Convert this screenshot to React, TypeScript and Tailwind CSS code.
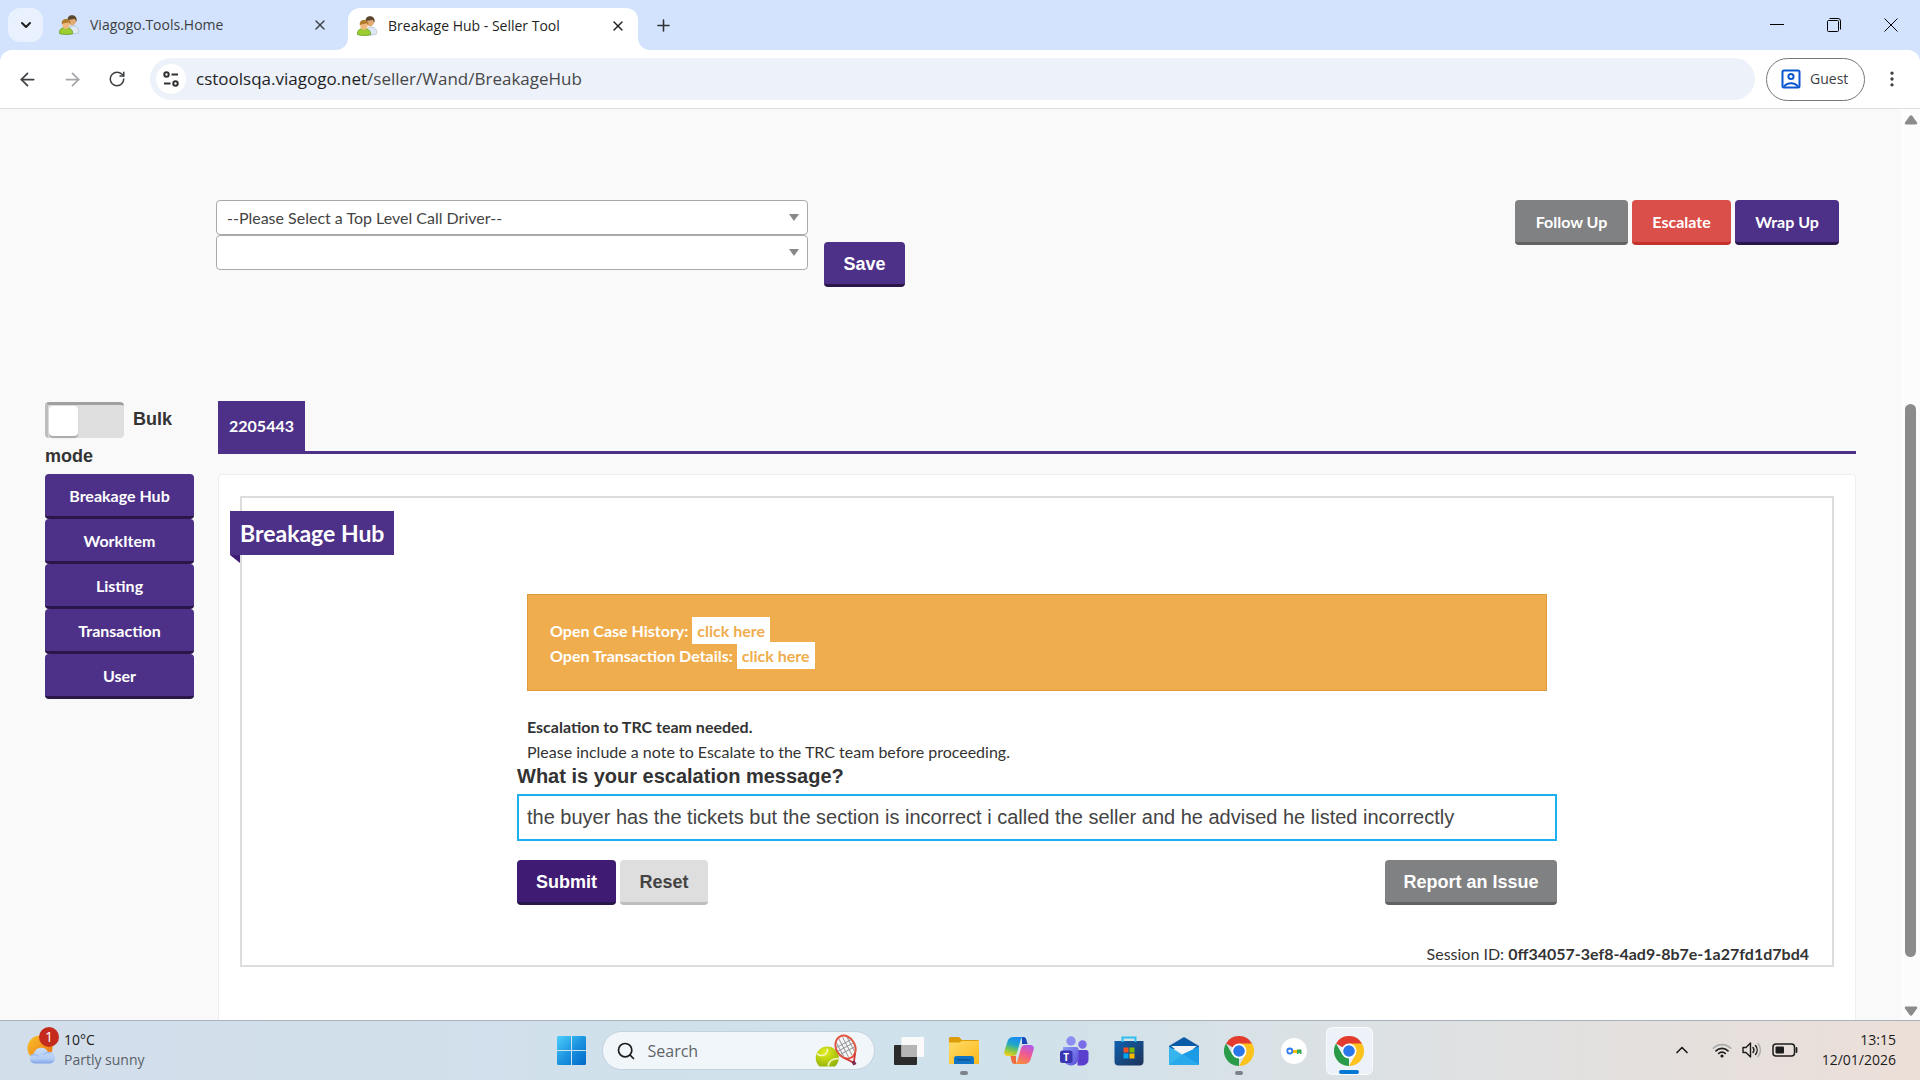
import type { ReactNode } from "react";
import {
  ArrowLeft,
  ArrowRight,
  ChevronDown,
  ChevronUp,
  EllipsisVertical,
  Plus,
  RotateCw,
  Search,
  X
} from "lucide-react";

const navItems = ["Breakage Hub", "WorkItem", "Listing", "Transaction", "User"];

const PeopleIcon = () => (
  <svg width="20" height="20" viewBox="0 0 20 20" aria-hidden="true">
    <path d="M9 19c-.2-5 1.6-8 5.300-8s5.500 2.600 5.500 6.500c-1.500 1.300-7 2-10.800 1.500Z" fill="#dfe9f3" stroke="#9fb4c8" strokeWidth=".6" />
    <ellipse cx="13.200" cy="5.800" rx="3.900" ry="4.600" fill="#e0aa72" />
    <path d="M8.700 5.500C8.300 1.800 10.300.3 13 .3s5.200 1.600 4.600 6.200c-1-.4-1.300-2-1.800-2.800-2.400 1-5.200.4-7.100 1.800Z" fill="#5c4630" />
    <path d="M.4 18.500c-.2-4.200 2-6 6.200-6s6.900 1.800 7.200 6c-3.200 1.400-10.200 1.400-13.400 0Z" fill="#9ccc2f" stroke="#5d9a1c" strokeWidth=".7" />
    <ellipse cx="7" cy="9.500" rx="3.700" ry="4.400" fill="#edb981" />
    <path d="M2.800 9.200C2.300 5.800 4.400 4 7 4s5 1.500 4.300 5.200c-.8-.4-1-1.300-1.500-2-2.200.9-5 .5-7 2Z" fill="#b07c2c" />
  </svg>
);

const SiteSettingsIcon = () => (
  <svg width="18" height="18" viewBox="0 0 18 18" fill="none" stroke="#303134" strokeWidth="2" aria-hidden="true">
    <circle cx="4.500" cy="4.500" r="2.200" />
    <path d="M9.500 4.500H16M2 13.500h6.500" />
    <circle cx="13.500" cy="13.500" r="2.200" />
  </svg>
);

const GuestIcon = () => (
  <svg width="20" height="20" viewBox="0 0 20 20" fill="none" stroke="#0b57d0" strokeWidth="2" aria-hidden="true">
    <rect x="1.500" y="1.500" width="17" height="17" rx="1.500" />
    <circle cx="10" cy="7.500" r="2.600" />
    <path d="M3 17.500c3-4.500 11-4.500 14 0" />
  </svg>
);

const TabFlare = ({ className }: { className: string }) => (
  <svg width="12" height="12" viewBox="0 0 12 12" className={className} aria-hidden="true">
    <path d="M12 0v12H0A12 12 0 0 0 12 0Z" fill="#fff" />
  </svg>
);

const SelectArrow = () => (
  <svg width="10" height="7" viewBox="0 0 10 7" className="pointer-events-none absolute top-[14px] right-[9px]" aria-hidden="true">
    <path d="M0 0h10L5 7Z" fill="#888" />
  </svg>
);

const WeatherIcon = () => (
  <svg width="30" height="30" viewBox="0 0 30 30" aria-hidden="true">
    <defs>
      <linearGradient id="sun" x1="0" y1="0" x2="1" y2="1">
        <stop offset="0" stopColor="#f7c52b" />
        <stop offset="1" stopColor="#ee6a10" />
      </linearGradient>
      <linearGradient id="cloud" x1="0" y1="0" x2="0" y2="1">
        <stop offset="0" stopColor="#c9dcf8" />
        <stop offset=".7" stopColor="#b4cdf5" />
        <stop offset="1" stopColor="#7fa3e6" />
      </linearGradient>
    </defs>
    <circle cx="13" cy="13" r="12.500" fill="url(#sun)" />
    <path d="M7.500 28.500a5 5 0 0 1-.6-9.900A7.500 7.500 0 0 1 21 17a5.800 5.800 0 0 1 2.500 11.500Z" fill="url(#cloud)" />
    <path d="M4 20.500c3-1.500 6-1 8 1M16 20c2-2.500 5-3 7.500-2" stroke="#8fb0ea" fill="none" />
  </svg>
);

const WindowsIcon = () => (
  <svg width="29" height="29" viewBox="0 0 29 29" aria-hidden="true">
    <defs>
      <linearGradient id="win" x1="0" y1="0" x2="29" y2="29" gradientUnits="userSpaceOnUse">
        <stop offset="0" stopColor="#4bd0fb" />
        <stop offset=".5" stopColor="#1c94e0" />
        <stop offset="1" stopColor="#0067c8" />
      </linearGradient>
    </defs>
    <path d="M1.500 0H14v14H0V1.500A1.500 1.500 0 0 1 1.500 0ZM15 0h12.500A1.500 1.500 0 0 1 29 1.500V14H15ZM0 15h14v14H1.500A1.500 1.500 0 0 1 0 27.500ZM15 15h14v12.500a1.500 1.500 0 0 1-1.500 1.500H15Z" fill="url(#win)" />
  </svg>
);

const TennisIcon = () => (
  <svg width="48" height="34" viewBox="0 0 48 34" aria-hidden="true">
    <defs>
      <radialGradient id="ball" cx=".4" cy=".3" r=".8">
        <stop offset="0" stopColor="#e4f01c" />
        <stop offset="1" stopColor="#8fae08" />
      </radialGradient>
    </defs>
    <path d="M4.500 32.500A11.500 11.500 0 1 1 20 32.500Z" fill="url(#ball)" />
    <path d="M2 20c7 4 11-1 10.500-5.500M13 32.500c.5-5 4-8 10.500-8" stroke="#f3f7c0" strokeWidth="1.500" fill="none" />
    <g transform="rotate(-28 31 14)">
      <ellipse cx="31" cy="13" rx="9.500" ry="12" fill="#f7f7f7" stroke="#e2553f" strokeWidth="2" />
      <path d="M25 5v16M29 3v20M33 3v20M37 5v16M22.500 9h17M22 13h18M22.500 17h17" stroke="#8b8f94" strokeWidth=".9" />
      <path d="m25.500 23 5 7M36.500 23l-5 7" stroke="#d13a36" strokeWidth="1.800" />
      <path d="M31 29v4" stroke="#7b2b54" strokeWidth="3.500" />
    </g>
  </svg>
);

const TaskViewIcon = () => (
  <svg width="30" height="28" viewBox="0 0 30 28" aria-hidden="true">
    <rect x="0" y="8" width="23" height="20" rx="1" fill="#2b2b2b" />
    <rect x="7.500" y="0" width="22.500" height="20" rx="1" fill="#fafafa" />
    <path d="M7.500 8H23v12H7.500Z" fill="#b5b5b5" />
  </svg>
);

const FolderIcon = () => (
  <svg width="30" height="27" viewBox="0 0 30 27" aria-hidden="true">
    <defs>
      <linearGradient id="folder" x1="0" y1="0" x2="1" y2="1">
        <stop offset="0" stopColor="#ffdb68" />
        <stop offset="1" stopColor="#fbb91b" />
      </linearGradient>
    </defs>
    <path d="M0 1.500C0 .6.600 0 1.500 0H10l3 3h15.500c.9 0 1.500.6 1.500 1.500V10H0Z" fill="#dd9c0a" />
    <path d="M0 5.500h10.500l2.500-1.500h17v23H0Z" fill="url(#folder)" />
    <path d="M5 21.500A2.500 2.500 0 0 1 7.500 19h15a2.500 2.500 0 0 1 2.500 2.500V27H5Z" fill="#0f74c4" />
    <path d="M8.500 22.800h13" stroke="#0a4f8e" strokeWidth="1.200" />
  </svg>
);

const CopilotIcon = () => (
  <svg width="30" height="27" viewBox="0 0 30 27" aria-hidden="true">
    <defs>
      <linearGradient id="copA" x1=".6" y1="0" x2=".3" y2="1">
        <stop offset="0" stopColor="#1a8bf0" />
        <stop offset=".4" stopColor="#20a7c8" />
        <stop offset=".7" stopColor="#7cc64c" />
        <stop offset="1" stopColor="#f3cf1f" />
      </linearGradient>
      <linearGradient id="copB" x1=".7" y1="0" x2=".3" y2="1">
        <stop offset="0" stopColor="#b35be6" />
        <stop offset=".45" stopColor="#ee5a92" />
        <stop offset="1" stopColor="#fb8c3c" />
      </linearGradient>
    </defs>
    <path d="M18 0h1.500c1.700 0 2.300 1 2.800 2.500L23.500 7H18Z" fill="#1647b8" />
    <path d="M12 27h-1.500c-1.700 0-2.300-1-2.800-2.500L6.500 19H12Z" fill="#ef6a3a" />
    <path d="M9.500 0h10c-1.800.5-2.500 1.700-3 3.500l-3.500 12c-.6 2-1.500 3.500-4 3.500H3.500C.8 19-.3 17 .3 14.500L3.600 4C4.500 1.300 6.500 0 9.500 0Z" fill="url(#copA)" />
    <path d="M20.500 27h-10c1.800-.5 2.500-1.700 3-3.500L17 11.500c.6-2 1.500-3.500 4-3.500h5.500c2.700 0 3.800 2 3.200 4.500L26.400 23c-.9 2.700-2.900 4-5.900 4Z" fill="url(#copB)" />
  </svg>
);

const TeamsIcon = () => (
  <svg width="29" height="30" viewBox="0 0 29 30" fontFamily="Open Sans, sans-serif" aria-hidden="true">
    <defs>
      <linearGradient id="teams" x1="0" y1="0" x2="1" y2="1">
        <stop offset="0" stopColor="#8b9cf8" />
        <stop offset="1" stopColor="#5b4fd8" />
      </linearGradient>
    </defs>
    <circle cx="11" cy="5" r="4.700" fill="#8d8ef2" />
    <circle cx="22.500" cy="8.500" r="4.200" fill="#7a6ce8" />
    <path d="M17.500 14H26a2.500 2.500 0 0 1 2.500 2.500V23a6 6 0 0 1-6 6.500h-5Z" fill="#5a3fcf" />
    <path d="M3 11h13a2.500 2.500 0 0 1 2.500 2.500V22a7.500 7.500 0 0 1-7.500 7.500A8.500 8.500 0 0 1 3 22Z" fill="url(#teams)" />
    <rect x="0" y="14.500" width="12.500" height="12.500" rx="2.500" fill="#3a35b1" />
    <text x="6.200" y="24.500" fontSize="10" fontWeight="700" fill="#fff" textAnchor="middle">T</text>
  </svg>
);

const StoreIcon = () => (
  <svg width="30" height="30" viewBox="0 0 30 30" aria-hidden="true">
    <defs>
      <linearGradient id="store" x1="0" y1="0" x2="1" y2="1">
        <stop offset="0" stopColor="#0e62b0" />
        <stop offset="1" stopColor="#1f3157" />
      </linearGradient>
    </defs>
    <path d="M.5 5h29v20.500a4 4 0 0 1-4 4h-21a4 4 0 0 1-4-4Z" fill="url(#store)" />
    <path d="M8.500 6V1.500h13V6" stroke="#30bdf0" strokeWidth="2" fill="none" />
    <path d="M9.500 11.500h5v5h-5Z" fill="#f25022" />
    <path d="M15.500 11.500h5v5h-5Z" fill="#7fba00" />
    <path d="M9.500 17.500h5v5h-5Z" fill="#00a4ef" />
    <path d="M15.500 17.500h5v5h-5Z" fill="#ffb900" />
  </svg>
);

const MailIcon = () => (
  <svg width="30" height="28" viewBox="0 0 30 28" aria-hidden="true">
    <path d="M0 9 15 0l15 9v3H0Z" fill="#0b5aa8" />
    <path d="M2 9h26L15 19Z" fill="#f1f3f6" />
    <path d="M0 9.500 30 28H0Z" fill="#36b4ee" />
    <path d="M30 9.500V28L13 17.500Z" fill="#1a9be6" />
    <path d="m0 28 14-10.500L30 28Z" fill="#27a9ec" />
  </svg>
);

const ChromeIcon = () => (
  <svg width="30" height="30" viewBox="0 0 48 48" aria-hidden="true">
    <path d="M24 24 3.200 12A24 24 0 0 1 44.800 12Z" fill="#e33b2e" />
    <path d="M24 24 24 48A24 24 0 0 1 3.200 12l10.400 18Z" fill="#2a9b48" />
    <path d="M24 12h20.800A24 24 0 0 1 24 48l10.400-18Z" fill="#fcc31c" />
    <circle cx="24" cy="24" r="12" fill="#fff" />
    <circle cx="24" cy="24" r="9.300" fill="#2b78ea" />
  </svg>
);

const KeyIcon = () => (
  <svg width="26" height="26" viewBox="0 0 26 26" aria-hidden="true">
    <circle cx="13" cy="13" r="13" fill="#fff" />
    <path d="M12 12h4v3h-4Z" fill="#fbbc04" />
    <path d="M16 11.500h4.500V16h-1.700v-1.200h-1.200V16H16Z" fill="#34a853" />
    <circle cx="8.800" cy="13" r="2.500" fill="none" stroke="#2f7df0" strokeWidth="1.800" />
  </svg>
);

const WifiIcon = () => (
  <svg width="20" height="16" viewBox="0 0 20 16" fill="none" strokeWidth="1.600" strokeLinecap="round" aria-hidden="true">
    <path d="M1.300 6.200a12.300 12.300 0 0 1 17.400 0" stroke="#a9abad" />
    <path d="M4 8.900a8.500 8.500 0 0 1 12 0M6.600 11.500a4.800 4.800 0 0 1 6.800 0" stroke="#1c1c1c" />
    <circle cx="10" cy="14" r="1.600" fill="#1c1c1c" />
  </svg>
);

const SpeakerIcon = () => (
  <svg width="20" height="18" viewBox="0 0 20 18" fill="none" stroke="#1c1c1c" strokeWidth="1.400" strokeLinecap="round" strokeLinejoin="round" aria-hidden="true">
    <path d="M1 6.500h3L8.500 2v14L4 11.500H1Z" />
    <path d="M11 6.500a4 4 0 0 1 0 5M13.500 4.500a7 7 0 0 1 0 9" />
    <path d="M16 2.500a10 10 0 0 1 0 13" stroke="#a9abad" />
  </svg>
);

const BatteryIcon = () => (
  <svg width="26" height="14" viewBox="0 0 26 14" aria-hidden="true">
    <rect x="1" y="1" width="21.500" height="12" rx="3" fill="none" stroke="#1c1c1c" strokeWidth="1.500" />
    <rect x="3.500" y="3.500" width="8.500" height="7" rx="1" fill="#1c1c1c" />
    <path d="M24.500 5v4" stroke="#1c1c1c" strokeWidth="1.800" strokeLinecap="round" />
  </svg>
);

const BrowserTabs = () => (
  <div className="flex h-[50px] items-center bg-[#d3e3fd] text-sm">
    <button aria-label="Search tabs" className="ml-2 flex h-[34px] w-[35px] items-center justify-center rounded-xl bg-[#e9f1fe]">
      <ChevronDown size={16} strokeWidth={3} className="text-[#1f1f1f]" />
    </button>
    <div className="ml-4 flex w-[269px] items-center gap-[11px] text-[#3c4043]">
      <PeopleIcon />
      <span className="flex-1">Viagogo.Tools.Home</span>
      <button aria-label="Close Viagogo.Tools.Home">
        <X size={16} strokeWidth={2} />
      </button>
    </div>
    <div className="relative mt-2 ml-5 flex h-[42px] w-[290px] items-center gap-[11px] rounded-t-xl bg-white pr-3 pb-[7px] pl-[9px] text-[#1f1f1f]">
      <TabFlare className="absolute bottom-0 -left-3" />
      <TabFlare className="absolute -right-3 bottom-0 -scale-x-100" />
      <PeopleIcon />
      <span className="flex-1">Breakage Hub - Seller Tool</span>
      <button aria-label="Close Breakage Hub">
        <X size={16} strokeWidth={2} />
      </button>
    </div>
    <button aria-label="New tab" className="ml-4 text-[#303134]">
      <Plus size={19} strokeWidth={2} />
    </button>
    <div className="mr-[22px] ml-auto flex items-center gap-[43px]">
      <button aria-label="Minimize">
        <svg width="14" height="14" viewBox="0 0 14 14"><path d="M0 6.500h14" stroke="#000" /></svg>
      </button>
      <button aria-label="Restore">
        <svg width="14" height="14" viewBox="0 0 14 14" fill="none" stroke="#000">
          <rect x=".5" y="2.500" width="11" height="11" rx="1" />
          <path d="M2.500.5h8.500a2.500 2.500 0 0 1 2.500 2.500v8.500" />
        </svg>
      </button>
      <button aria-label="Close window">
        <svg width="14" height="14" viewBox="0 0 14 14"><path d="m.5.500 13 13M13.500.500l-13 13" stroke="#000" /></svg>
      </button>
    </div>
  </div>
);

const AddressBar = () => (
  <div className="bg-[#d3e3fd]">
    <div className="flex h-[59px] items-center rounded-t-xl border-b border-[#dedfe1] bg-white pr-[18px] pl-[17px] text-[#3c4043]">
      <button aria-label="Back"><ArrowLeft size={21} strokeWidth={2} /></button>
      <button aria-label="Forward" className="ml-6 text-[#a3a5a8]"><ArrowRight size={21} strokeWidth={2} /></button>
      <button aria-label="Reload" className="ml-[25px]"><RotateCw size={18} strokeWidth={2} /></button>
      <div className="ml-6 flex h-[42px] flex-1 items-center gap-[10px] rounded-full bg-[#ecf1fa] px-[6px]">
        <button aria-label="View site information" className="flex size-[30px] items-center justify-center rounded-full bg-white">
          <SiteSettingsIcon />
        </button>
        <p className="text-[17px] text-[#474747]">
          <span className="text-[#1f1f1f]">cstoolsqa.viagogo.net</span>/seller/Wand/BreakageHub
        </p>
      </div>
      <button className="ml-[11px] flex h-[43px] w-[99px] items-center gap-[9px] rounded-full border border-[#747775] pl-[14px] text-sm">
        <GuestIcon />
        Guest
      </button>
      <button aria-label="Chrome menu" className="ml-[17px]"><EllipsisVertical size={20} strokeWidth={2} /></button>
    </div>
  </div>
);

const topActions = [
  { label: "Follow Up", className: "w-[113px] border-[#626263] bg-[#808182]" },
  { label: "Escalate", className: "w-[99px] border-[#c4302b] bg-[#da4f49]" },
  { label: "Wrap Up", className: "w-[104px] border-[#291749] bg-[#4d3188]" }
];

const CallDriverBar = () => (
  <div className="flex items-start pt-[91px] pr-[62px] pl-[216px]">
    <div className="w-[592px]">
      <div className="relative">
        <select aria-label="Top level call driver" className="block h-[35px] w-full appearance-none rounded border border-[#aaa] bg-white px-[10px] text-[#444]">
          <option>--Please Select a Top Level Call Driver--</option>
        </select>
        <SelectArrow />
      </div>
      <div className="relative">
        <select aria-label="Second level call driver" className="block h-[35px] w-full appearance-none rounded border border-[#aaa] bg-white px-[10px] text-[#444]">
          <option></option>
        </select>
        <SelectArrow />
      </div>
    </div>
    <button className="mt-[42px] ml-4 h-[45px] w-[81px] rounded border-b-3 border-[#291749] bg-[#4d3188] pt-[2px] font-[Liberation_Sans] text-lg font-bold text-white">
      Save
    </button>
    <div className="ml-auto flex gap-1">
      {topActions.map((action) => (
        <button key={action.label} className={`h-[45px] rounded border-b-3 pt-[2px] font-bold text-white ${action.className}`}>
          {action.label}
        </button>
      ))}
    </div>
  </div>
);

const Sidebar = () => (
  <aside className="w-[149px] shrink-0">
    <label className="block font-[Liberation_Sans] text-lg leading-[36px] font-bold text-[#333]">
      <input type="checkbox" className="peer sr-only" />
      <span className="mr-[9px] inline-block h-9 w-[79px] rounded border-t-3 border-l-3 border-t-[#a0a0a0] border-l-[#bdbdbd] bg-[#dedede] pt-px pl-px align-middle">
        <span className="block h-[30px] w-[29px] rounded-sm bg-white shadow-[0_2px_1px_#aaa]" />
      </span>
      Bulk mode
    </label>
    <nav className="flex flex-col">
      {navItems.map((item) => (
        <button key={item} className="h-[45px] rounded border-b-3 border-[#291749] bg-[#4d3188] pt-[2px] font-bold text-white">
          {item}
        </button>
      ))}
    </nav>
  </aside>
);

const HistoryLink = ({ label }: { label: string }) => (
  <p>
    {label}{" "}
    <a href="#case" className="bg-white px-[5px] py-1 text-[#f0ad4e]">click here</a>
  </p>
);

const EscalationForm = () => (
  <form className="mx-auto mt-[39px] w-2/3 px-[10px] font-[Liberation_Sans] text-lg font-bold text-[#333]">
    <div className="mx-[10px] font-[Lato] text-base leading-[25px] font-normal">
      <div className="h-[97px] border border-[#dc9a3c] bg-[#f0ad4e] px-[22px] pt-[23px] font-bold text-white">
        <HistoryLink label="Open Case History:" />
        <HistoryLink label="Open Transaction Details:" />
      </div>
      <p className="mt-[23px] font-bold">Escalation to TRC team needed.</p>
      <p>Please include a note to Escalate to the TRC team before proceeding.</p>
    </div>
    <label htmlFor="message" className="block text-xl leading-[25px]">What is your escalation message?</label>
    <input
      id="message"
      className="mt-[5px] h-[47px] w-full border-2 border-[#1db0ee] px-2 text-xl font-normal text-[#444] outline-none"
      defaultValue="the buyer has the tickets but the section is incorrect i called the seller and he advised he listed incorrectly"
    />
    <div className="mt-[19px] flex gap-1">
      <button type="submit" className="h-[45px] w-[99px] rounded border-b-3 border-[#291749] bg-[#3f1b73] pt-[2px] text-white">Submit</button>
      <button type="reset" className="h-[45px] w-[88px] rounded border-b-3 border-[#bebebe] bg-[#dedede] pt-[2px] text-[#444]">Reset</button>
      <button type="button" className="ml-auto h-[45px] w-[172px] rounded border-b-3 border-[#626263] bg-[#808182] pt-[2px] text-white">Report an Issue</button>
    </div>
  </form>
);

const Workspace = () => (
  <main className="flex min-w-0 flex-1 flex-col">
    <div className="flex h-[53px] border-b-3 border-[#4d3188]">
      <button className="w-[87px] bg-[#4d3188] font-bold text-white">2205443</button>
    </div>
    <div className="mt-5 flex-1 rounded-t border border-b-0 border-[#eee] bg-white px-[21px] pt-[21px]">
      <section className="border-2 border-[#ddd]">
        <div className="relative mt-[13px] -ml-3 w-fit">
          <h1 className="h-11 bg-[#4d3188] px-[10px] text-[23px] leading-[44px] font-bold text-white">Breakage Hub</h1>
          <svg width="10" height="8" viewBox="0 0 10 8" className="absolute top-full left-0" aria-hidden="true">
            <path d="M0 0h10v8Z" fill="#3f1b73" />
          </svg>
        </div>
        <EscalationForm />
        <p className="mt-[38px] pr-[23px] text-right leading-[22px]">
          Session ID: <b>0ff34057-3ef8-4ad9-8b7e-1a27fd1d7bd4</b>
        </p>
      </section>
    </div>
  </main>
);

const Scrollbar = () => (
  <div className="flex w-[19px] shrink-0 flex-col items-center bg-[#fcfcfc] pt-[6px] pb-1">
    <svg width="14" height="10" viewBox="0 0 14 10"><path d="M5.500 1.200a2 2 0 0 1 3 0L13 7.500c.6 1 0 2-1 2H2c-1 0-1.600-1-1-2Z" fill="#8b8b8b" /></svg>
    <div className="flex w-full flex-1 flex-col items-center">
      <div className="flex-[279]" />
      <div className="w-[11px] flex-[553] rounded-full bg-[#8b8b8b]" />
      <div className="flex-[49]" />
    </div>
    <svg width="14" height="10" viewBox="0 0 14 10"><path d="M5.500 8.800a2 2 0 0 0 3 0L13 2.500c.6-1 0-2-1-2H2c-1 0-1.600 1-1 2Z" fill="#8b8b8b" /></svg>
  </div>
);

type AppButtonProps = { label: string; children: ReactNode; running?: boolean; active?: boolean };

const AppButton = ({ label, children, running, active }: AppButtonProps) => (
  <button
    aria-label={label}
    className={`relative flex h-12 w-[47px] items-center justify-center rounded-md ${active ? "border border-white/60 bg-[#edf2f8]" : ""}`}
  >
    {children}
    {running && <span className="absolute bottom-0 h-1 w-2 rounded-full bg-[#7d8388]" />}
    {active && <span className="absolute bottom-0 h-1 w-5 rounded-full bg-[#0078d4]" />}
  </button>
);

const Taskbar = () => (
  <footer className="flex h-[60px] shrink-0 items-center border-t border-[#a9b3be] bg-linear-to-r from-[#d3deeb] via-[#cfe2ec] to-[#ecdfd8] pr-6 pl-[27px] text-[#1c1c1c]">
    <div className="flex flex-1 items-center gap-[7px] pb-[2px] text-sm leading-[20px]">
      <div className="relative">
        <WeatherIcon />
        <span className="absolute -top-2 left-[12px] flex size-5 items-center justify-center rounded-full bg-[#c42b1c] text-sm text-white">1</span>
      </div>
      <p>
        10°C
        <br />
        <span className="text-[#5a6067]">Partly sunny</span>
      </p>
    </div>
    <div className="flex items-center gap-2 pl-[6px]">
      <button aria-label="Start"><WindowsIcon /></button>
      <label className="mr-[3px] ml-2 flex h-[39px] w-[273px] items-center rounded-full border border-[#c3d1dd] bg-[#f1f6fa] pr-[11px] pl-[13px]">
        <Search size={20} strokeWidth={2} />
        <input aria-label="Search" placeholder="Search" className="ml-3 w-32 text-base outline-none placeholder:text-[#5f6468]" />
        <span className="ml-auto"><TennisIcon /></span>
      </label>
      <AppButton label="Task view"><TaskViewIcon /></AppButton>
      <AppButton label="File Explorer" running><FolderIcon /></AppButton>
      <AppButton label="Copilot"><CopilotIcon /></AppButton>
      <AppButton label="Teams"><TeamsIcon /></AppButton>
      <AppButton label="Microsoft Store"><StoreIcon /></AppButton>
      <AppButton label="Mail"><MailIcon /></AppButton>
      <AppButton label="Chrome" running><ChromeIcon /></AppButton>
      <AppButton label="Password Manager"><KeyIcon /></AppButton>
      <AppButton label="Chrome, Breakage Hub" active><ChromeIcon /></AppButton>
    </div>
    <div className="flex flex-1 items-center justify-end pb-[2px] text-sm leading-[20px]">
      <ChevronUp size={20} strokeWidth={2} />
      <span className="ml-5 flex items-center gap-[10px]">
        <WifiIcon />
        <SpeakerIcon />
        <BatteryIcon />
      </span>
      <p className="ml-6 text-right">
        13:15
        <br />
        12/01/2026
      </p>
    </div>
  </footer>
);

const App = () => (
  <div className="flex h-screen flex-col overflow-hidden font-[Open_Sans,sans-serif]">
    <BrowserTabs />
    <AddressBar />
    <div className="flex min-h-0 flex-1 bg-[#f9f9f9] font-[Lato,sans-serif] text-base text-[#333]">
      <div className="flex min-w-0 flex-1 flex-col">
        <CallDriverBar />
        <div className="mt-[114px] flex flex-1 gap-6 pr-[45px] pl-[45px]">
          <Sidebar />
          <Workspace />
        </div>
      </div>
      <Scrollbar />
    </div>
    <Taskbar />
  </div>
);

export default App;
